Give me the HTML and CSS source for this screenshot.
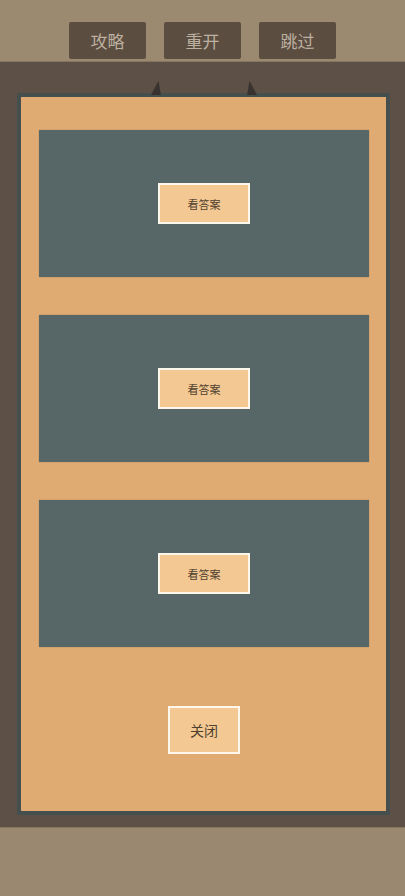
FILE: index.html
```html
<!DOCTYPE html>
<html lang="zh">
<head>
<meta charset="utf-8">
<link rel="stylesheet" href="styles.css">
</head>
<body>
<div class="top">
  <div class="tbtn">攻略</div>
  <div class="tbtn">重开</div>
  <div class="tbtn">跳过</div>
</div>
<div class="stage">
  <svg class="horn horn-l" width="10" height="14" viewBox="0 0 10 14"><path d="M7.5 0 L10 14 L0 14 Q3 8 7.5 0 Z" fill="#393330"/></svg>
  <svg class="horn horn-r" width="10" height="14" viewBox="0 0 10 14"><path d="M2.5 0 L0 14 L10 14 Q7 8 2.5 0 Z" fill="#393330"/></svg>
  <div class="panel">
    <div class="card"><div class="ans">看答案</div></div>
    <div class="card"><div class="ans">看答案</div></div>
    <div class="card"><div class="ans">看答案</div></div>
    <div class="close">关闭</div>
  </div>
</div>
<div class="bottom"></div>
</body>
</html>
```
FILE: styles.css
```css
html, body {
  margin: 0;
  padding: 0;
}
body {
  width: 405px;
  height: 896px;
  background: #5d5147;
  font-family: "Noto Sans CJK SC", "Noto Sans", sans-serif;
  overflow: hidden;
}
.top {
  height: 62px;
  box-sizing: border-box;
  padding-top: 22px;
  background: #9b8a70;
  border-bottom: 1px solid #85765f;
  display: flex;
  justify-content: center;
  gap: 18px;
}
.tbtn {
  width: 77px;
  height: 37px;
  background: #5c4d41;
  border-radius: 2px;
  color: #bcb0a0;
  font-size: 17px;
  display: flex;
  align-items: center;
  justify-content: center;
}
.stage {
  position: relative;
  height: 765px;
  box-sizing: border-box;
  padding: 31px 0 0 17px;
}
.horn {
  position: absolute;
  top: 19px;
  display: block;
  z-index: 1;
}
.horn-l { left: 151px; }
.horn-r { left: 247px; }
.panel {
  position: relative;
  width: 373px;
  height: 722px;
  box-sizing: border-box;
  border: 4px solid #45504e;
  background: #dfab72;
  padding: 33px 0 0 18px;
  display: flex;
  flex-direction: column;
}
.card {
  width: 330px;
  height: 147px;
  background: #576767;
  margin-bottom: 38px;
  display: flex;
  align-items: center;
  justify-content: center;
  box-shadow: 0 0 1px rgba(0,0,0,0.3);
}
.ans {
  width: 92px;
  height: 41px;
  box-sizing: border-box;
  border: 2px solid #fdf6ea;
  background: #f3c893;
  color: #4f3f2e;
  font-size: 11px;
  display: flex;
  align-items: center;
  justify-content: center;
}
.close {
  align-self: flex-start;
  margin: 21px 0 0 129px;
  width: 72px;
  height: 48px;
  box-sizing: border-box;
  border: 2px solid #fdf6ea;
  background: #f3c893;
  color: #4f3f2e;
  font-size: 14px;
  display: flex;
  align-items: center;
  justify-content: center;
}
.bottom {
  height: 69px;
  background: #9a8870;
  border-top: 1px solid #85765f;
}
```
